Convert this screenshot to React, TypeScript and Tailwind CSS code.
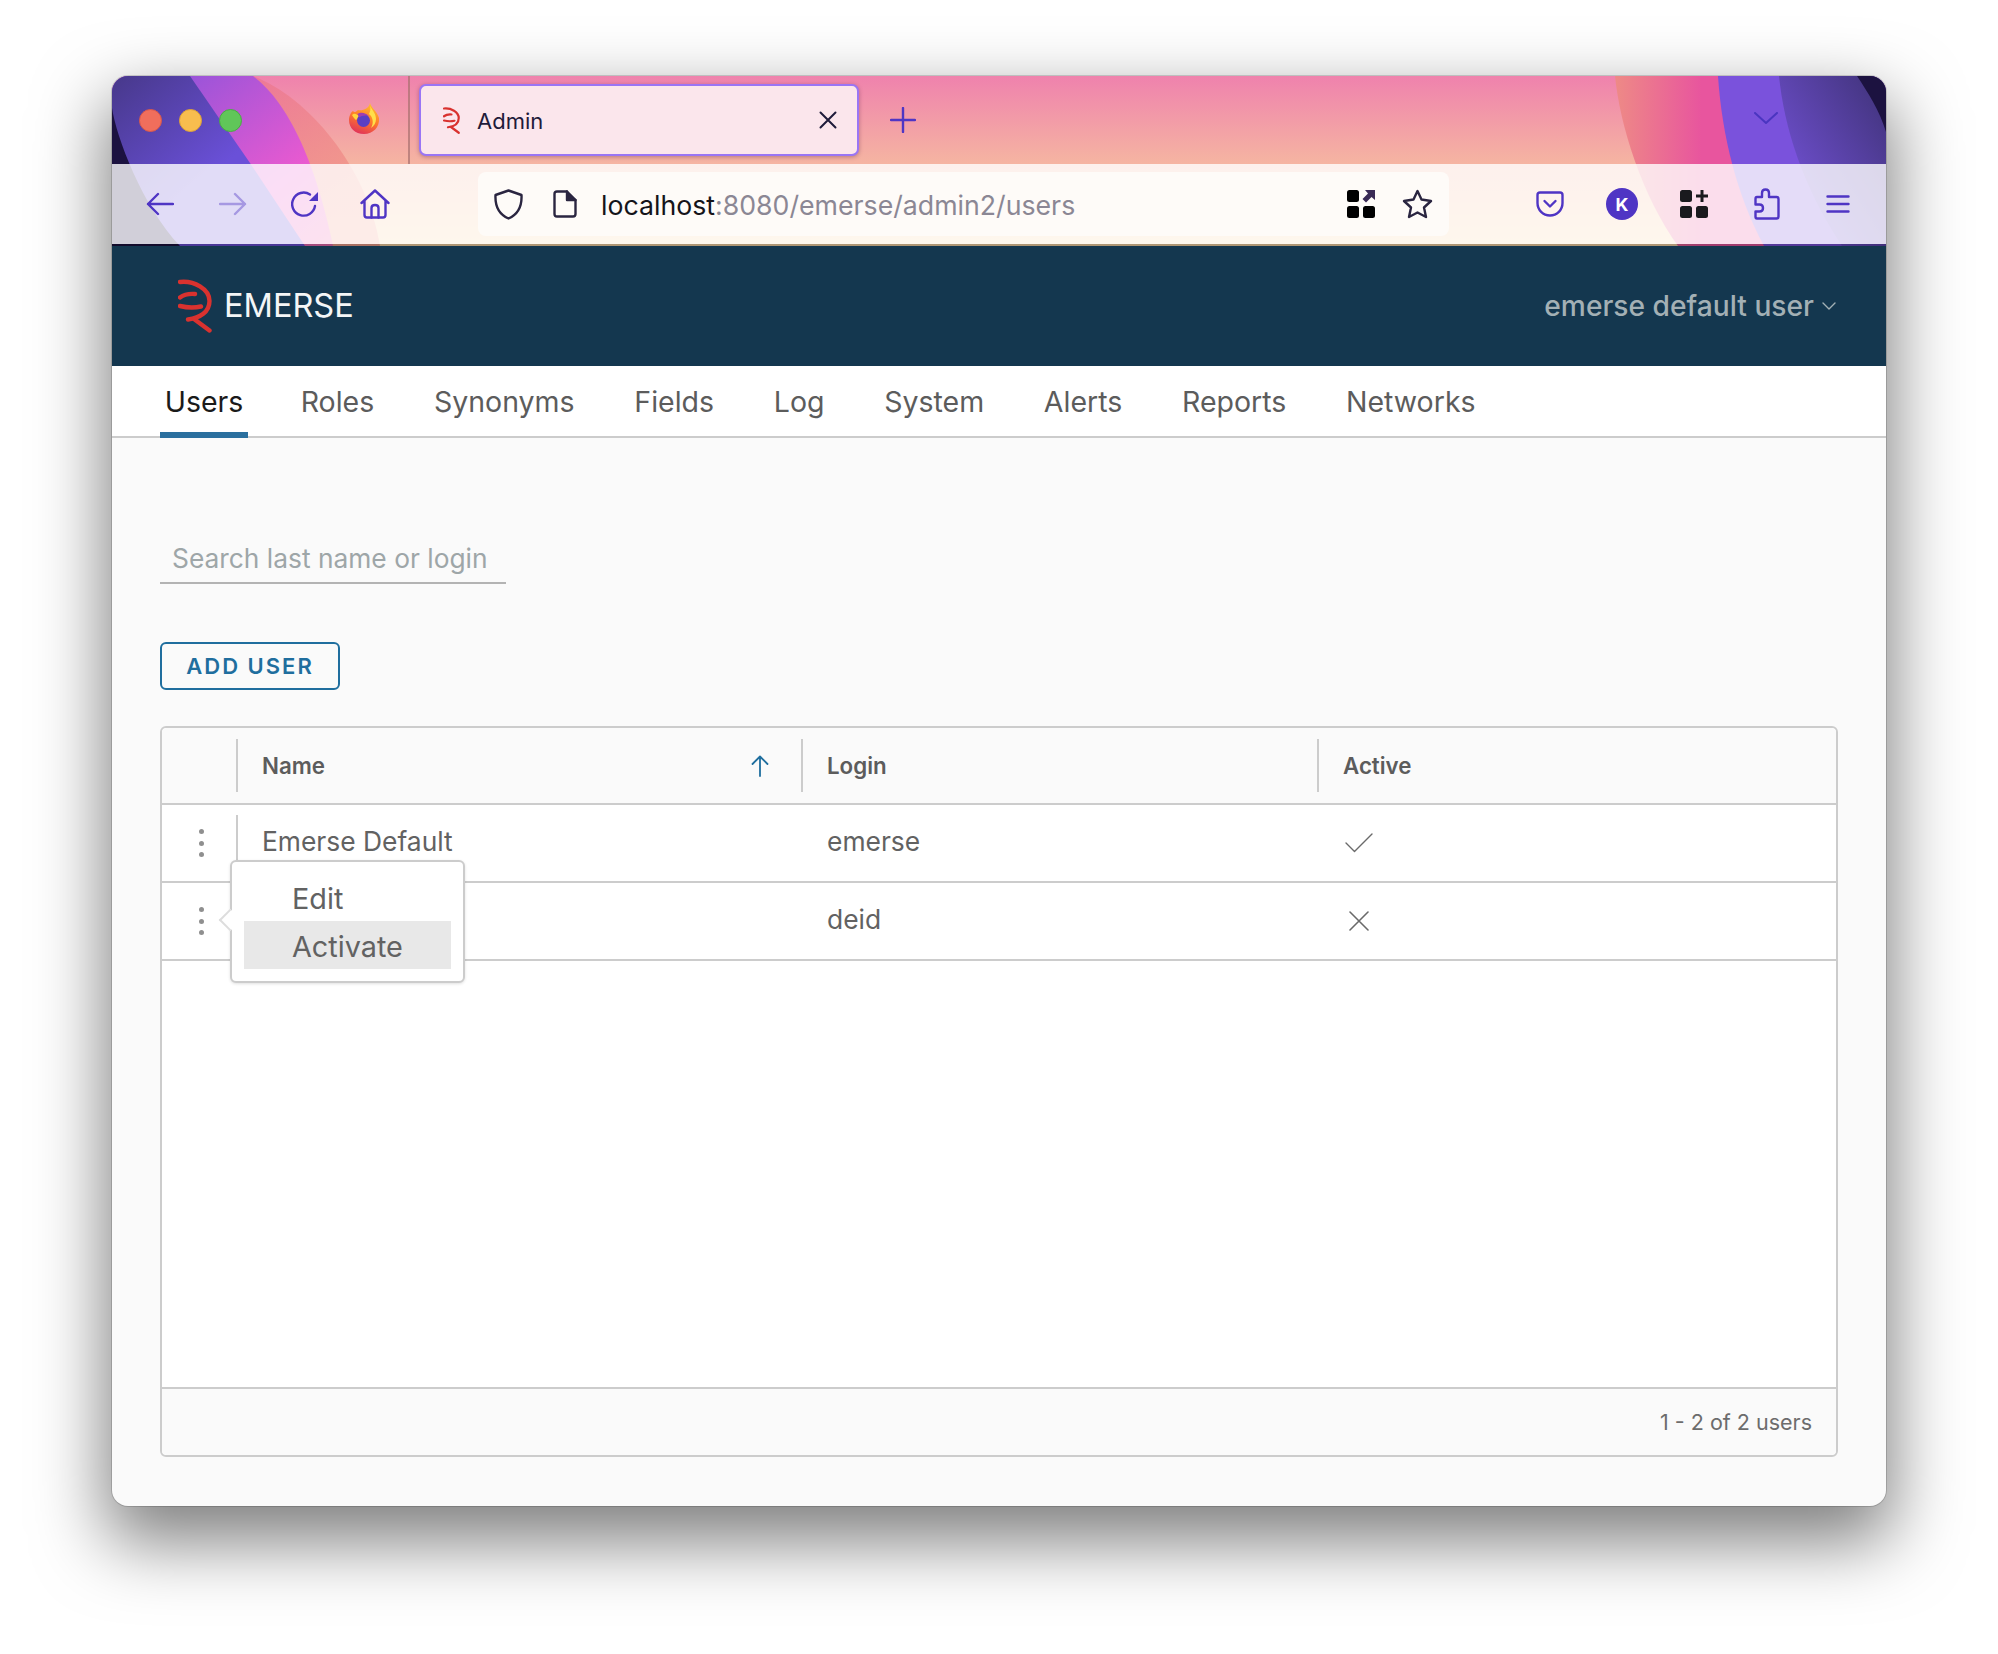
import React from 'react';

const ICON = '#4f35c4';

// red "E/R" mark used in the header and on the browser tab
function EmerseMark({ className }: { className?: string }) {
  return (
    <svg viewBox="0 0 34 54" className={className} fill="none" stroke="#d9322f" strokeWidth="4.4" strokeLinecap="round">
      <path d="M2 3C16 1.5 31.5 10 31.5 22C31.5 33 22 39 10 40.5" />
      <path d="M16 40L31.5 51.5" />
      <path d="M2 18.5C6 15.5 11 14.5 17 15" />
      <path d="M2 27C8 28.5 16 29 23 27.5" />
    </svg>
  );
}

function FirefoxLogo() {
  return (
    <svg viewBox="0 0 32 32" className="w-[32px] h-[32px]">
      <defs>
        <linearGradient id="ffbody" x1="0.7" y1="0" x2="0.3" y2="1">
          <stop offset="0" stopColor="#ffc22e" />
          <stop offset="0.5" stopColor="#ff7a2b" />
          <stop offset="1" stopColor="#e0315b" />
        </linearGradient>
      </defs>
      <path d="M22 0C22.5 4 29 8 31 15C32 24 25 31 16 31C7 31 1 25 1 17C1 13 3 9 5 8C6 10 8 9 10 7C14 8 21 6 22 0Z" fill="url(#ffbody)" />
      <path d="M4 12C7 9 9 12 12 13L8 17C6 15 5 14 4 12Z" fill="#ffd53d" />
      <path d="M22 3C25 8 28 11 28 16C28 20 26 23 23 25C26 20 25 14 21 11C22 9 23 6 22 3Z" fill="#ffe04a" />
      <circle cx="15.5" cy="17.5" r="6.5" fill="#5b3fc4" />
      <path d="M9.5 11C13 8.5 18 10 21 13C17 12 13 13 11 14.5Z" fill="#a03fb0" />
    </svg>
  );
}

// theme artwork behind the tab strip and the toolbar
function ThemeArt() {
  return (
    <svg viewBox="0 0 1774 170" preserveAspectRatio="none" className="absolute inset-0 w-full h-full">
      <defs>
        <linearGradient id="sky" x1="0" y1="0" x2="0" y2="1">
          <stop offset="0" stopColor="#ef82ad" />
          <stop offset="0.5" stopColor="#f5b3a2" />
          <stop offset="1" stopColor="#fad7a6" />
        </linearGradient>
        <linearGradient id="pinkL" x1="0" y1="0" x2="1" y2="0.4">
          <stop offset="0" stopColor="#e8609a" />
          <stop offset="1" stopColor="#f08f85" />
        </linearGradient>
        <linearGradient id="magenta" x1="0" y1="0" x2="1" y2="1">
          <stop offset="0" stopColor="#7f52dc" />
          <stop offset="0.7" stopColor="#ea5ad0" />
          <stop offset="1" stopColor="#ee70b0" />
        </linearGradient>
        <linearGradient id="deep" x1="0" y1="0" x2="1" y2="1">
          <stop offset="0" stopColor="#47388a" />
          <stop offset="0.55" stopColor="#6a50d8" />
          <stop offset="1" stopColor="#6a50d8" />
        </linearGradient>
        <linearGradient id="rightPink" x1="0" y1="0" x2="1" y2="0">
          <stop offset="0" stopColor="#ee8a86" />
          <stop offset="0.55" stopColor="#e8559e" />
          <stop offset="1" stopColor="#e8559e" />
        </linearGradient>
        <linearGradient id="deepR" x1="1" y1="0" x2="0" y2="1">
          <stop offset="0" stopColor="#3f3278" />
          <stop offset="1" stopColor="#7d58e8" />
        </linearGradient>
      </defs>
      <rect width="1774" height="170" fill="url(#sky)" />
      <path d="M0 0H141C195 20 255 90 268 170H0Z" fill="url(#pinkL)" opacity="0.75" />
      <path d="M0 0H141C170 22 200 70 221 170H0Z" fill="url(#magenta)" />
      <path d="M0 0H78L138 87L193 170H0Z" fill="url(#deep)" />
      <path d="M0 32C4 60 30 130 68 170H0Z" fill="#1c1240" />
      <path d="M1503 0C1508 50 1530 120 1566 170H1660V0Z" fill="url(#rightPink)" />
      <path d="M1606 0C1610 60 1625 120 1652 170H1774V0Z" fill="#7a52dc" />
      <path d="M1667 0C1672 50 1690 110 1730 170H1774V0Z" fill="url(#deepR)" />
      <path d="M1745 0C1755 15 1768 35 1774 56V0Z" fill="#1c1240" />
      <rect y="88" width="1774" height="80" fill="#ffffff" opacity="0.8" />
      <rect y="168" width="1774" height="2" fill="#000000" opacity="0.3" />
    </svg>
  );
}

function StrokeIcon({ box, className, color = ICON, width = 2.4, children }: { box: string; className: string; color?: string; width?: number; children: React.ReactNode }) {
  return (
    <svg viewBox={box} className={className} fill="none" stroke={color} strokeWidth={width} strokeLinecap="round" strokeLinejoin="round">
      {children}
    </svg>
  );
}

function BrowserChrome() {
  return (
    <div className="relative h-[170px] shrink-0 font-['Inter',sans-serif]">
      <ThemeArt />
      <div className="relative flex items-center h-[88px]">
        <div className="ml-[27px] w-[23px] h-[23px] rounded-full bg-[#f06e5c] border border-[#d9584a]" />
        <div className="ml-[17px] w-[23px] h-[23px] rounded-full bg-[#f8bd4e] border border-[#dea238]" />
        <div className="ml-[17px] w-[23px] h-[23px] rounded-full bg-[#60c659] border border-[#4aa845]" />
        <div className="ml-[106px] w-[32px] h-[32px] -mt-[2px]">
          <FirefoxLogo />
        </div>
        <div className="ml-[28px] w-[2px] h-[88px] bg-[#a8706f]/70" />
        <div className="ml-[9px] w-[440px] h-[72px] rounded-[7px] border-2 border-[#9a75f5] bg-[#fbe6ec] shadow-[0_1px_4px_rgba(60,20,60,0.35)] flex items-center">
          <EmerseMark className="ml-[22px] w-[17px] h-[27px]" />
          <span className="ml-[17px] pt-[3px] text-[22px] text-[#1f1b3a]">Admin</span>
          <StrokeIcon box="0 0 18 18" className="ml-auto mr-[20px] w-[18px] h-[18px]" color="#1f1b3a" width={2}>
            <path d="M1.5 1.5L16.5 16.5M16.5 1.5L1.5 16.5" />
          </StrokeIcon>
        </div>
        <StrokeIcon box="0 0 26 26" className="ml-[31px] w-[26px] h-[26px]">
          <path d="M13 1V25M1 13H25" />
        </StrokeIcon>
        <StrokeIcon box="0 0 24 12" className="ml-[838px] -mt-[4px] w-[24px] h-[12px]" color="#4a35c0" width={2}>
          <path d="M1 1L12 11L23 1" />
        </StrokeIcon>
      </div>
      <div className="relative flex items-center h-[80px]">
        <StrokeIcon box="0 0 28 24" className="ml-[34px] w-[28px] h-[24px]">
          <path d="M27 12H2M12 2L2 12L12 22" />
        </StrokeIcon>
        <StrokeIcon box="0 0 28 24" className="ml-[45px] w-[28px] h-[24px] opacity-40">
          <path d="M1 12H26M16 2L26 12L16 22" />
        </StrokeIcon>
        <svg viewBox="0 0 28 28" className="ml-[44px] w-[28px] h-[28px]" fill="none">
          <path d="M24 16A11.5 11.5 0 1 1 19 4.5" stroke={ICON} strokeWidth="2.4" strokeLinecap="round" />
          <path d="M27 2V11H18Z" fill={ICON} />
        </svg>
        <StrokeIcon box="0 0 30 30" className="ml-[41px] w-[30px] h-[30px]">
          <path d="M1.5 14L15 1.5L28.5 14M4.5 11.5V26C4.5 27.5 5.5 28.5 7 28.5H23C24.5 28.5 25.5 27.5 25.5 26V11.5" />
          <path d="M11.5 28.5V19C11.5 17 13 16 15 16C17 16 18.5 17 18.5 19V28.5" />
        </StrokeIcon>
        <div className="ml-[88px] w-[971px] h-[64px] rounded-[8px] bg-[#fefbf8] flex items-center">
          <StrokeIcon box="0 0 29 31" className="ml-[16px] w-[29px] h-[31px]" color="#2a2540">
            <path d="M14.5 1.5L27.5 6C28 16 25 25 14.5 29.5C4 25 1 16 1.5 6Z" />
          </StrokeIcon>
          <StrokeIcon box="0 0 24 28" className="ml-[30px] w-[24px] h-[28px]" color="#2a2540">
            <path d="M4 1.5H14L22.5 10V24C22.5 25.5 21.5 26.5 20 26.5H4C2.5 26.5 1.5 25.5 1.5 24V4C1.5 2.5 2.5 1.5 4 1.5Z" />
            <path d="M14 1.5V10H22.5" fill="#2a2540" />
          </StrokeIcon>
          <span className="ml-[24px] pt-[2px] text-[26.7px] text-[#15141a] whitespace-nowrap">
            localhost<span className="text-[#8b8794]">:8080/emerse/admin2/users</span>
          </span>
          <svg viewBox="0 0 28 28" className="ml-auto w-[28px] h-[28px]" fill="#000000">
            <rect width="12" height="12" rx="2.5" />
            <rect y="16" width="12" height="12" rx="2.5" />
            <rect x="16" y="16" width="12" height="12" rx="2.5" />
            <path d="M18 0H28V10L24.5 7L19 12.5L15.5 9L21 3.5Z" fill="#3a2a55" />
          </svg>
          <StrokeIcon box="0 0 31 30" className="ml-[27px] mr-[16px] w-[31px] h-[30px]" color="#2a2540">
            <path d="M15.5 2L19.5 10.5L29 12L22 18.5L24 28L15.5 23.5L7 28L9 18.5L2 12L11.5 10.5Z" />
          </StrokeIcon>
        </div>
        <StrokeIcon box="0 0 28 26" className="ml-[87px] w-[28px] h-[26px]">
          <path d="M4 1.5H24C25.5 1.5 26.5 2.5 26.5 4V12C26.5 19 21 24.5 14 24.5C7 24.5 1.5 19 1.5 12V4C1.5 2.5 2.5 1.5 4 1.5Z" />
          <path d="M8.5 10L14 15.5L19.5 10" />
        </StrokeIcon>
        <div className="ml-[42px] w-[32px] h-[32px] rounded-full bg-[#4f35c4] flex items-center justify-center text-white text-[18px] font-bold">K</div>
        <svg viewBox="0 0 28 28" className="ml-[42px] w-[28px] h-[28px]" fill="#1a1a1e">
          <rect width="12" height="12" rx="2.5" />
          <rect y="16" width="12" height="12" rx="2.5" />
          <rect x="16" y="16" width="12" height="12" rx="2.5" />
          <path d="M20.5 0H23.5V4.5H28V7.5H23.5V12H20.5V7.5H16V4.5H20.5Z" />
        </svg>
        <StrokeIcon box="0 0 26 32" className="ml-[46px] w-[26px] h-[32px]">
          <path d="M8 9V5C8 3 9.5 1.5 11.5 1.5C13.5 1.5 15 3 15 5V9H22.5C23.5 9 24.5 10 24.5 11V28.5C24.5 29.5 23.5 30.5 22.5 30.5H3C2 30.5 1.5 29.5 1.5 28.5V23.5H5.5C7.5 23.5 9 22 9 20C9 18 7.5 16.5 5.5 16.5H1.5V11C1.5 10 2 9 3 9Z" />
        </StrokeIcon>
        <StrokeIcon box="0 0 24 18" className="ml-[46px] w-[24px] h-[18px]">
          <path d="M1.5 1.5H22.5M1.5 9H22.5M1.5 16.5H22.5" />
        </StrokeIcon>
      </div>
    </div>
  );
}

const tabs = ['Users', 'Roles', 'Synonyms', 'Fields', 'Log', 'System', 'Alerts', 'Reports', 'Networks'];

function RowDots() {
  return (
    <div className="w-[74px] flex flex-col items-center gap-[6.5px] pl-[5px]">
      <div className="w-[5px] h-[5px] rounded-full bg-[#8f8f8f]" />
      <div className="w-[5px] h-[5px] rounded-full bg-[#8f8f8f]" />
      <div className="w-[5px] h-[5px] rounded-full bg-[#8f8f8f]" />
    </div>
  );
}

function UsersTable() {
  // second row's name sits under the open menu
  const rows = [
    { name: 'Emerse Default', login: 'emerse', active: true },
    { name: '', login: 'deid', active: false },
  ];

  return (
    <div className="relative mt-[36px] h-[731px] flex flex-col rounded-[6px] border-2 border-[#cccccc] bg-white">
      <div className="flex items-center h-[77px] shrink-0 border-b-2 border-[#cccccc] bg-[#fafafa] rounded-t-[5px] text-[22.3px] font-semibold text-[#5c5c5c]">
        <div className="w-[74px]" />
        <div className="w-[565px] h-[53px] border-l-2 border-[#cccccc] pl-[24px] pr-[32px] flex items-center justify-between">
          <span>Name</span>
          <StrokeIcon box="0 0 18 22" className="w-[18px] h-[22px]" color="#1f6e9e" width={1.8}>
            <path d="M9 21V1.5M1.5 9L9 1.5L16.5 9" />
          </StrokeIcon>
        </div>
        <div className="w-[516px] h-[53px] border-l-2 border-[#cccccc] pl-[24px] flex items-center">Login</div>
        <div className="h-[53px] border-l-2 border-[#cccccc] pl-[24px] flex items-center">Active</div>
      </div>
      {rows.map((row) => (
        <div key={row.login} className="flex items-center h-[78px] shrink-0 border-b-2 border-[#cccccc] text-[26.4px] text-[#626262]">
          <RowDots />
          <div className="w-[565px] h-[53px] border-l-2 border-[#cccccc] pl-[24px] flex items-center -mt-[3px]">{row.name}</div>
          <div className="w-[516px] pl-[26px] -mt-[3px]">{row.login}</div>
          <div className="pl-[28px]">
            {row.active ? (
              <StrokeIcon box="0 0 28 20" className="w-[28px] h-[20px]" color="#6a6a6a" width={1.4}>
                <path d="M1 10L9.5 18.5L27 1" />
              </StrokeIcon>
            ) : (
              <StrokeIcon box="0 0 28 20" className="w-[28px] h-[20px]" color="#6a6a6a" width={1.6}>
                <path d="M5 1L23 19M23 1L5 19" />
              </StrokeIcon>
            )}
          </div>
        </div>
      ))}
      <div className="flex-1" />
      <div className="h-[68px] shrink-0 border-t-2 border-[#cccccc] bg-[#fafafa] rounded-b-[5px] flex items-center justify-end pr-[24px] text-[21.5px] text-[#6c6c6c]">
        1 - 2 of 2 users
      </div>

      {/* action menu opened from the second row */}
      <div className="absolute left-[68px] top-[132px] w-[235px] h-[123px] z-10 rounded-[6px] border-2 border-[#cccccc] bg-white shadow-[0_1px_3px_rgba(0,0,0,0.12)] px-[12px] py-[11px] text-[28.8px] text-[#626262]">
        <div className="absolute -left-[10px] top-[50px] w-[16px] h-[16px] rotate-45 border-l-2 border-b-2 border-[#dddddd] bg-white" />
        <div className="relative h-[48px] pl-[48px] pt-[3px] flex items-center">Edit</div>
        <div className="relative h-[48px] pl-[48px] pt-[3px] flex items-center bg-[#e8e8e8]">Activate</div>
      </div>
    </div>
  );
}

export default function App() {
  return (
    <div className="w-[1998px] h-[1654px] bg-white pt-[76px] pl-[112px] overflow-hidden">
      <div className="w-[1774px] h-[1430px] flex flex-col rounded-[16px] overflow-hidden bg-[#fafafa] ring-1 ring-black/15 shadow-[0_30px_70px_6px_rgba(0,0,0,0.5)] font-['Inter',sans-serif]">
        <BrowserChrome />
        <header className="h-[120px] shrink-0 bg-[#14374f] flex items-center">
          <EmerseMark className="ml-[66px] w-[34px] h-[54px]" />
          <span className="ml-[12px] text-[32.5px] font-normal text-[#f4f6f7]">EMERSE</span>
          <div className="ml-auto mr-[50px] flex items-center text-[#a3b0b5]">
            <span className="text-[28.2px] font-medium">emerse default user</span>
            <StrokeIcon box="0 0 14 8" className="ml-[8px] w-[14px] h-[8px]" color="#a3b0b5" width={1.4}>
              <path d="M1 1L7 7L13 1" />
            </StrokeIcon>
          </div>
        </header>
        <nav className="h-[72px] shrink-0 bg-white border-b-2 border-[#cccccc] flex px-[48px] gap-[49.7px] text-[28.5px] text-[#5c5c5c]">
          {tabs.map((tab, i) => (
            <div
              key={tab}
              className={i === 0 ? 'h-[72px] w-[88px] justify-center -mr-[2px] pt-[6px] flex items-center border-b-[6px] border-[#2a6f9e] text-[#1a1a1a]' : 'h-[72px] px-[5px] pt-[6px] flex items-center border-b-[6px] border-transparent'}
            >
              {tab}
            </div>
          ))}
        </nav>
        <main className="flex-1 px-[48px] pr-[48px]">
          <input
            readOnly
            placeholder="Search last name or login"
            className="block mt-[97px] w-[346px] h-[49px] pl-[12px] pb-[2px] bg-transparent outline-none border-b-2 border-[#b3b3b3] text-[26.35px] placeholder:text-[#9ea6a8]"
          />
          <button className="block mt-[58px] w-[180px] h-[48px] rounded-[6px] border-2 border-[#1f6e9e] text-[22px] font-semibold tracking-[2px] text-[#1f6e9e]">
            ADD USER
          </button>
          <UsersTable />
        </main>
      </div>
    </div>
  );
}
